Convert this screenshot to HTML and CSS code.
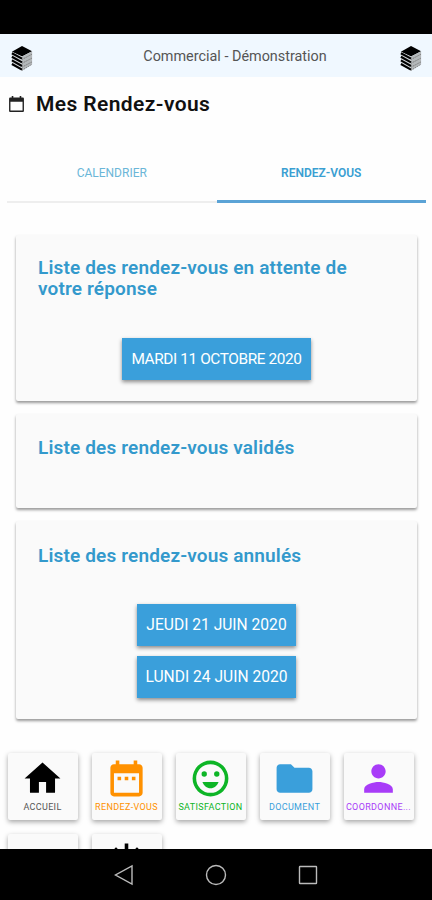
FILE: index.html
```html
<!DOCTYPE html>
<html lang="fr">
<head>
    <meta charset="UTF-8">
    <meta name="viewport" content="width=device-width, initial-scale=1.0">
    <title>Mes Rendez-vous</title>
    <link rel="stylesheet" href="styles.css">
</head>
<body>
    <svg width="0" height="0" class="defs">
        <symbol id="logo" viewBox="0 0 22 26">
            <path fill="#000" d="M11 0L21.500 5.500 11 11 0.500 6z"/>
            <path fill="#d3d7da" d="M0.500 6L11 11V26L0.500 19.500z"/>
            <path fill="#b4b8ba" d="M11 11L21.500 5.500V19L11 25.500z"/>
            <path stroke="#000" stroke-width="2.200" fill="none" d="M0.500 7.500L11 13.200M0.500 11.200L11 17M0.500 15L11 20.800M0.500 18.700L11 24.600"/>
            <path stroke="#777" stroke-width="1" stroke-dasharray="1.500 1" fill="none" d="M11 14L21.500 8.500M11 18L21.500 12.500M11 22L21.500 16.500M11 25.300L21.500 19"/>
        </symbol>
    </svg>
    <div class="status-bar"></div>
    <header class="header">
        <svg class="logo"><use href="#logo"/></svg>
        <span class="header-title">Commercial - Démonstration</span>
        <svg class="logo"><use href="#logo"/></svg>
    </header>
    <main>
        <div class="page-title">
            <svg viewBox="0 0 16 16"><path fill="#222" fill-rule="evenodd" d="M2 1.500h1.500V0H5v1.500h6V0h1.500v1.500H14q1 0 1 1V14q0 1-1 1H2q-1 0-1-1V2.500q0-1 1-1zM2.300 5.500v8.200h11.400V5.500z"/></svg>
            <h1>Mes Rendez-vous</h1>
        </div>
        <div class="tabs">
            <div class="tab">CALENDRIER</div>
            <div class="tab active">RENDEZ-VOUS</div>
        </div>
        <div class="lists">
            <section class="card pending">
                <h2>Liste des rendez-vous en attente de votre réponse</h2>
                <button class="btn wide">MARDI 11 OCTOBRE 2020</button>
            </section>
            <section class="card valid">
                <h2>Liste des rendez-vous validés</h2>
            </section>
            <section class="card cancelled">
                <h2>Liste des rendez-vous annulés</h2>
                <button class="btn">JEUDI 21 JUIN 2020</button>
                <button class="btn">LUNDI 24 JUIN 2020</button>
            </section>
        </div>
        <nav class="menu">
            <a class="tile home">
                <svg viewBox="0 0 24 24"><path d="M10 20v-6h4v6h5v-8h3L12 3 2 12h3v8z"/></svg>
                <span>ACCUEIL</span>
            </a>
            <a class="tile rdv">
                <svg viewBox="0 0 24 24"><path d="M9 11H7v2h2v-2zm4 0h-2v2h2v-2zm4 0h-2v2h2v-2zm2-7h-1V2h-2v2H8V2H6v2H5c-1.110 0-1.990.900-1.990 2L3 20c0 1.100.890 2 2 2h14c1.100 0 2-.900 2-2V6c0-1.100-.900-2-2-2zm0 16H5V9h14v11z"/></svg>
                <span>RENDEZ-VOUS</span>
            </a>
            <a class="tile smile">
                <svg viewBox="0 0 24 24"><path d="M12 2a10 10 0 1 0 0 20 10 10 0 0 0 0-20zm0 18a8 8 0 1 1 0-16 8 8 0 0 1 0 16z"/><circle cx="8.500" cy="9.500" r="1.500"/><circle cx="15.500" cy="9.500" r="1.500"/><path d="M7.500 14h9c-.7 2-2.400 3.500-4.500 3.500S8.200 16 7.500 14z"/></svg>
                <span>SATISFACTION</span>
            </a>
            <a class="tile doc">
                <svg viewBox="0 0 24 24"><path d="M10 4H4c-1.100 0-1.990.900-1.990 2L2 18c0 1.100.900 2 2 2h16c1.100 0 2-.900 2-2V8c0-1.100-.900-2-2-2h-8l-2-2z"/></svg>
                <span>DOCUMENT</span>
            </a>
            <a class="tile person">
                <svg viewBox="0 0 24 24"><path d="M12 12c2.210 0 4-1.790 4-4s-1.790-4-4-4-4 1.790-4 4 1.790 4 4 4zm0 2c-2.670 0-8 1.340-8 4v2h16v-2c0-2.660-5.330-4-8-4z"/></svg>
                <span>COORDONNE...</span>
            </a>
            <a class="tile"></a>
            <a class="tile power">
                <svg viewBox="0 0 24 24"><path d="M13 3h-2v10h2V3zm4.830 2.170l-1.420 1.420C17.990 7.860 19 9.810 19 12c0 3.870-3.130 7-7 7s-7-3.130-7-7c0-2.190 1.010-4.140 2.580-5.420L6.170 5.170C4.230 6.820 3 9.260 3 12c0 4.970 4.030 9 9 9s9-4.030 9-9c0-2.740-1.230-5.180-3.170-6.830z"/></svg>
            </a>
        </nav>
    </main>
    <footer class="nav-bar">
        <svg viewBox="0 0 24 24"><path d="M20 3v18L3.500 12z"/></svg>
        <svg viewBox="0 0 24 24"><circle cx="12" cy="12" r="9.500"/></svg>
        <svg viewBox="0 0 24 24"><rect x="3.500" y="3.500" width="17" height="17" rx="0.500"/></svg>
    </footer>
</body>
</html>
```
FILE: styles.css
```css
* {
    padding: 0;
    margin: 0;
    box-sizing: border-box;
}
body {
    display: flex;
    flex-direction: column;
    height: 900px;
    overflow: hidden;
    background-color: #fefefe;
    font-family: Roboto, sans-serif;
}
.defs {
    display: none;
}
.status-bar {
    height: 34px;
    flex-shrink: 0;
    background-color: #000;
}
.header {
    display: flex;
    justify-content: space-between;
    height: 43px;
    flex-shrink: 0;
    padding: 12px 10px 0 11px;
    background-color: #f0f8ff;
}
.logo {
    width: 22px;
    height: 25px;
}
.header-title {
    padding-left: 37px;
    font-size: 14.4px;
    line-height: 21px;
    color: #555;
}
main {
    height: 772px;
    flex-shrink: 0;
    overflow: hidden;
}
.page-title {
    display: flex;
    align-items: center;
    gap: 11px;
    height: 54px;
    padding-left: 8px;
}
.page-title svg {
    width: 17px;
    height: 17px;
}
h1 {
    font-size: 21px;
    font-weight: 600;
    letter-spacing: 0.4px;
    color: #111;
}
.tabs {
    display: flex;
    height: 72px;
    margin: 0 6px 0 7px;
}
.tab {
    flex: 1;
    padding-top: 34px;
    border-bottom: 2px solid #eee;
    text-align: center;
    font-size: 12px;
    line-height: 16px;
    color: #6bb6d8;
}
.tab.active {
    border-bottom: 3px solid #5ba3d6;
    font-weight: 600;
    color: #3a9fd2;
}
.lists {
    display: flex;
    flex-direction: column;
    gap: 13px;
    padding: 32px 15px 0 16px;
}
.card {
    display: flex;
    flex-direction: column;
    align-items: center;
    gap: 10px;
    padding: 22px;
    border-radius: 2px;
    background-color: #fafafa;
    box-shadow: 0 2px 3px rgba(0, 0, 0, 0.4);
}
.pending {
    height: 166px;
}
.valid {
    height: 94px;
    padding-top: 23px;
}
.cancelled {
    height: 198px;
    padding-top: 24px;
}
h2 {
    align-self: stretch;
    padding-right: 30px;
    font-size: 19px;
    font-weight: 600;
    line-height: 21px;
    letter-spacing: 0.15px;
    color: #3399cc;
}
.pending h2 {
    margin-bottom: 29px;
}
.cancelled h2 {
    margin-bottom: 28px;
}
.btn {
    width: 159px;
    height: 42px;
    flex-shrink: 0;
    border: none;
    background-color: #3a9fdb;
    box-shadow: 0 2px 4px rgba(0, 0, 0, 0.45);
    font-family: inherit;
    font-size: 15.6px;
    color: #fff;
}
.btn.wide {
    width: 189px;
    font-size: 15.4px;
    letter-spacing: -0.4px;
}
.menu {
    display: grid;
    grid-template-columns: repeat(5, 70px);
    gap: 14px;
    padding: 34px 0 0 7.5px;
}
.tile {
    display: flex;
    flex-direction: column;
    align-items: center;
    height: 67px;
    padding-top: 4px;
    border-radius: 2px;
    background-color: #fafafa;
    box-shadow: 0 2px 5px rgba(0, 0, 0, 0.35);
    font-size: 9px;
    line-height: 14px;
    letter-spacing: 0.35px;
    white-space: nowrap;
}
.tile svg {
    width: 43px;
    height: 43px;
    fill: currentColor;
}
.home, .power {
    color: #000;
}
.home span {
    color: #555;
}
.rdv {
    color: #ff9100;
}
.smile {
    color: #0db526;
}
.doc {
    color: #3a9fdb;
}
.person {
    color: #a83cf8;
}
.nav-bar {
    display: flex;
    justify-content: center;
    align-items: center;
    gap: 68px;
    height: 51px;
    flex-shrink: 0;
    background-color: #000;
}
.nav-bar svg {
    width: 24px;
    height: 24px;
    fill: none;
    stroke: #bbb;
    stroke-width: 1.4;
}
```
